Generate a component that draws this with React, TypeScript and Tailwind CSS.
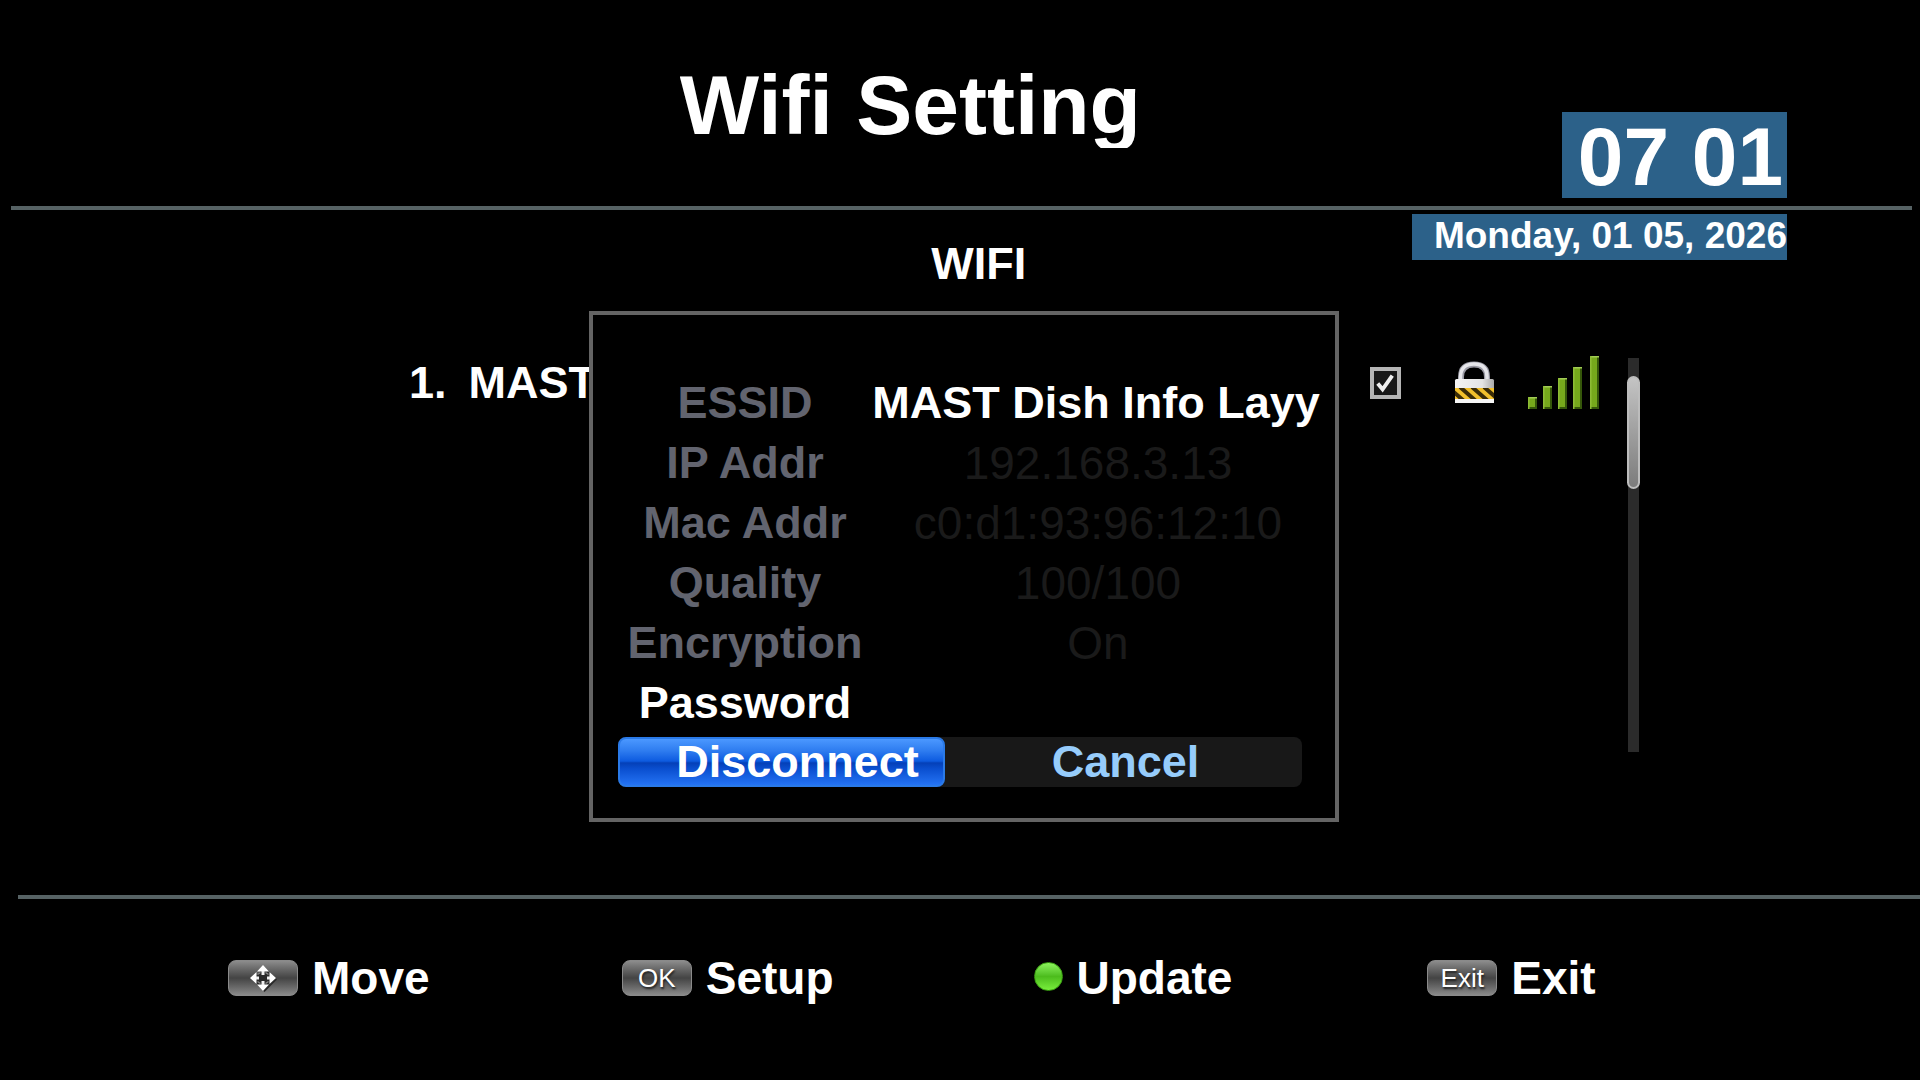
import React from 'react';
import clsx from 'clsx';

interface InfoRow {
  label: string;
  value: string;
  active?: boolean;
}

const network = 'MAST Dish Info Layy';

const infoRows: InfoRow[] = [
  { label: 'ESSID', value: network, active: true },
  { label: 'IP Addr', value: '192.168.3.13' },
  { label: 'Mac Addr', value: 'c0:d1:93:96:12:10' },
  { label: 'Quality', value: '100/100' },
  { label: 'Encryption', value: 'On' },
];

const keyClass =
  "flex h-9 w-[70px] items-center justify-center rounded-lg border border-[#8a8a8a] bg-linear-to-b from-[#8c8c8c] via-[#444444] via-50% to-[#8a8a8a] font-['Liberation_Sans',Arial,sans-serif] text-[26px] leading-none font-normal text-white [text-shadow:1px_2px_2px_#222]";

const MoveIcon = () => (
  <svg viewBox="0 0 28 28" className="h-7 w-7" aria-hidden="true">
    <path d="M15.500 3L28 15.500 15.500 28 3 15.500z" fill="#2a2a2a" />
    <path d="M14 1l6 6.500H8zM14 27l6-6.500H8zM1 14l6.500-6v12zM27 14l-6.500-6v12z" fill="#fff" />
    <path d="M14 7v4M14 17v4M7 14h3M18 14h3" stroke="#f0f0f0" strokeWidth="3" />
    <path d="M8.500 10.500l3-2M19.500 10.500l-3-2M8.500 17.500l3 2M19.500 17.500l-3 2" stroke="#888" strokeWidth="1.500" />
  </svg>
);

const LockIcon = () => (
  <svg viewBox="0 0 42 44" className="h-11 w-[42px]" role="img" aria-label="Secured">
    <defs>
      <linearGradient id="lockBody" x1="0" x2="1" y1="0" y2="0">
        <stop offset="0" stopColor="#f4f4f4" />
        <stop offset="0.7" stopColor="#e4e4e4" />
        <stop offset="1" stopColor="#aaaaaa" />
      </linearGradient>
      <clipPath id="lockBand">
        <rect x="1" y="27" width="39" height="12" />
      </clipPath>
    </defs>
    <path d="M7 20v-4C7 7 12 3.500 20 3.500S33 7 33 16v4" fill="none" stroke="#9a9aa4" strokeWidth="6" />
    <path d="M6.500 20v-4C6.500 7 12 3 20 3s13 4 13 13v4" fill="none" stroke="#e6e6ea" strokeWidth="3.500" />
    <rect x="1" y="18" width="39" height="24" rx="1.500" fill="url(#lockBody)" />
    <g clipPath="url(#lockBand)">
      <rect x="1" y="27" width="40" height="12" fill="#f2c02c" />
      <path d="M-6 26l16 14M6 26l16 14M18 26l16 14M30 26l16 14" stroke="#3a2c08" strokeWidth="4" />
    </g>
    <rect x="1" y="38" width="39" height="4" fill="#f6f6f6" />
  </svg>
);

const bars = [
  { x: 0, h: 12 },
  { x: 15, h: 23 },
  { x: 30, h: 31 },
  { x: 45, h: 42 },
  { x: 62, h: 53 },
];

const SignalIcon = () => (
  <svg viewBox="0 0 72 54" className="h-[54px] w-[72px]" role="img" aria-label="Signal 100%">
    {bars.map(bar => (
      <g key={bar.x}>
        <rect x={bar.x} y={53 - bar.h} width="9" height={bar.h} fill="#35570a" />
        <rect x={bar.x} y={53 - bar.h} width="7" height={bar.h - 2} fill="#76a81c" />
        <rect x={bar.x} y={53 - bar.h} width="9" height="1.500" fill="#a2cc55" />
        <rect x={bar.x} y={53 - bar.h} width="1.500" height={bar.h} fill="#8dbb35" />
      </g>
    ))}
  </svg>
);

const NetworkDialog = () => (
  <div
    role="dialog"
    aria-label="Network"
    className="absolute top-[101px] left-[589px] w-[750px] border-4 border-[#646464] bg-black pt-[58px] pr-[15px] pb-[31px] pl-[25px]"
  >
    <dl>
      {infoRows.map(row => (
        <div key={row.label} className="grid h-[60px] grid-cols-[254px_1fr] text-center leading-[60px]">
          <dt className="font-bold text-[#62646f]">{row.label}</dt>
          <dd className={clsx('whitespace-nowrap', row.active ? 'font-bold' : 'pl-1 text-[46px] text-[#1a1a1a]')}>
            {row.value}
          </dd>
        </div>
      ))}
    </dl>
    <div className="grid h-[60px] grid-cols-[254px_1fr] text-center leading-[60px]">
      <label htmlFor="password" className="font-bold">Password</label>
      <input id="password" type="password" className="min-w-0 bg-transparent text-center outline-none" />
    </div>
    <div className="mt-1 mr-[18px] flex h-[50px] rounded-lg bg-[#181818] leading-[46px] font-bold">
      <button
        type="button"
        className="w-[327px] rounded-lg border-2 border-[#2a7ae8] bg-[linear-gradient(to_bottom,#4b98ff_0%,#2f7df0_25%,#0d5be0_48%,#0440b8_52%,#0a4fd0_65%,#2473f4_100%)] pl-8"
      >
        Disconnect
      </button>
      <button type="button" className="flex-1 rounded-r-lg pl-1 text-[#96ccfb]">Cancel</button>
    </div>
  </div>
);

export default function App() {
  return (
    <div className="flex min-h-screen flex-col overflow-hidden bg-black font-['Liberation_Sans',Arial,sans-serif] text-[45px] text-white">
      <header className="flex h-[206px] items-start justify-between pr-[133px] pl-[35.4%]">
        <h1 className="mt-[60px] h-[88px] overflow-hidden text-[84px] leading-[90px] font-bold">Wifi Setting</h1>
        <time className="mt-28 h-[86px] w-[225px] bg-[#2c6189] pr-1 text-right text-[82px] leading-[90px] font-bold">
          07 01
        </time>
      </header>
      <hr className="mr-2 ml-[11px] border-0 border-t-4 border-[#566264]" />

      <main className="relative h-[685px]">
        <div className="flex items-start justify-between pt-1 pr-[133px] pl-[48.5%]">
          <h2 className="mt-5 leading-[60px] font-bold">WIFI</h2>
          <p className="h-[46px] w-[375px] bg-[#2c6189] text-right text-[37px] leading-[44px] font-bold whitespace-nowrap">
            Monday, 01 05, 2026
          </p>
        </div>

        <div className="mt-16 flex items-start justify-between pr-[280px] pl-[409px]">
          <div className="mt-[-5px] flex flex-1 items-center leading-[60px] font-bold">
            <span className="mr-[22px]">1.</span>
            <label htmlFor="network" className="flex-1">{network}</label>
            <span className="relative flex h-8 w-[31px]">
              <input
                id="network"
                type="checkbox"
                defaultChecked
                className="h-8 w-[31px] appearance-none border-4 border-[#b5b5b5] bg-[#181818]"
              />
              <svg viewBox="0 0 32 32" className="pointer-events-none absolute inset-0" aria-hidden="true">
                <path d="M8 17l5 6L23 9" fill="none" stroke="#eee" strokeWidth="4" />
              </svg>
            </span>
            <span className="ml-[53px]"><LockIcon /></span>
            <span className="ml-8"><SignalIcon /></span>
          </div>
          <div className="ml-[27px] h-[394px] w-[13px] px-px">
            <div className="h-full w-full bg-[#2b2b2b] pt-[18px]">
              <div className="-mx-px h-[113px] rounded-full border-2 border-[#bdbdbd] bg-linear-to-b from-[#c4c4c4] to-[#7c7c7c]" />
            </div>
          </div>
        </div>

        <NetworkDialog />
      </main>

      <hr className="ml-[18px] border-0 border-t-4 border-[#566264]" />
      <footer className="grid grid-cols-[394fr_412fr_394fr_493fr] pt-[49px] pl-[228px] text-[46px] leading-[60px] font-bold">
        <div className="flex items-center gap-3.5">
          <kbd className={keyClass}><MoveIcon /></kbd>
          <span>Move</span>
        </div>
        <div className="flex items-center gap-3.5">
          <kbd className={keyClass}>OK</kbd>
          <span>Setup</span>
        </div>
        <div className="flex items-center gap-3.5">
          <span className="mb-1 h-[29px] w-[29px] rounded-full border border-[#3aa012] bg-linear-to-b from-[#8cf45c] via-[#4cbc1c] to-[#78ee3c]" />
          <span>Update</span>
        </div>
        <div className="flex items-center gap-3.5">
          <kbd className={keyClass}>Exit</kbd>
          <span>Exit</span>
        </div>
      </footer>
    </div>
  );
}
